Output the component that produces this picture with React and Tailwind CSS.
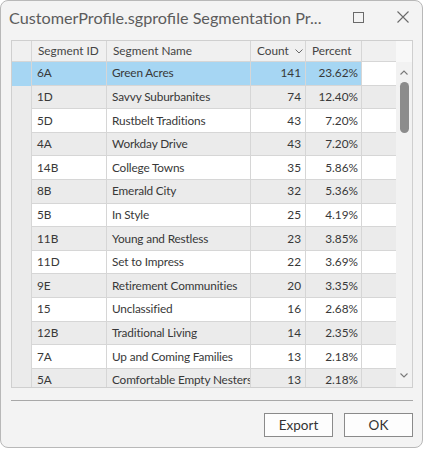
import React from 'react';

const ROWS = [
  ['6A', 'Green Acres', 141, '23.62%'],
  ['1D', 'Savvy Suburbanites', 74, '12.40%'],
  ['5D', 'Rustbelt Traditions', 43, '7.20%'],
  ['4A', 'Workday Drive', 43, '7.20%'],
  ['14B', 'College Towns', 35, '5.86%'],
  ['8B', 'Emerald City', 32, '5.36%'],
  ['5B', 'In Style', 25, '4.19%'],
  ['11B', 'Young and Restless', 23, '3.85%'],
  ['11D', 'Set to Impress', 22, '3.69%'],
  ['9E', 'Retirement Communities', 20, '3.35%'],
  ['15', 'Unclassified', 16, '2.68%'],
  ['12B', 'Traditional Living', 14, '2.35%'],
  ['7A', 'Up and Coming Families', 13, '2.18%'],
  ['5A', 'Comfortable Empty Nesters', 13, '2.18%'],
];

const FONT = { fontFamily: 'Lato, "Noto Sans", sans-serif' };

function Row({ row, idx }) {
  const selected = idx === 0;
  const bg = selected ? 'bg-[#a6d6f3]' : idx % 2 === 1 ? 'bg-[#ebebeb]' : 'bg-white';
  const gutter = selected ? 'bg-[#a6d6f3]' : 'bg-[#ebebeb]';
  const extra = selected ? 'bg-white' : idx % 2 === 1 ? 'bg-[#ebebeb]' : 'bg-white';
  return (
    <div className="flex h-[23.6px] shrink-0 text-[11.8px] text-[#383838]">
      <div className={`w-[20px] shrink-0 border-r border-[#d6d6d6] ${gutter}`} />
      <div className={`w-[75px] shrink-0 flex items-center pl-[5px] border-r border-b border-[#d6d6d6] ${bg}`}>
        {row[0]}
      </div>
      <div className={`w-[144px] shrink-0 flex items-center pl-[5px] border-r border-b border-[#d6d6d6] whitespace-nowrap overflow-hidden tracking-[-0.15px] ${bg}`}>
        {row[1]}
      </div>
      <div className={`w-[55px] shrink-0 flex items-center justify-end pr-[4px] border-r border-b border-[#d6d6d6] ${bg}`}>
        {row[2]}
      </div>
      <div className={`w-[56px] shrink-0 flex items-center justify-end pr-[3px] border-r border-b border-[#d6d6d6] ${bg}`}>
        {row[3]}
      </div>
      <div className={`w-[34px] shrink-0 border-b border-[#d6d6d6] ${extra}`} />
    </div>
  );
}

export default function App() {
  return (
    <div className="w-[424px] h-[450px] bg-white" style={FONT}>
      <div className="w-[423px] h-[448px] rounded-[8px] border border-[#b8b8b8] bg-[#f3f3f3] flex flex-col overflow-hidden">
        {/* Title bar */}
        <div className="h-[39px] flex items-start shrink-0">
          <div className="w-[340px] pt-[5px] pl-[8px] text-[16.2px] text-[#5c5c5c] whitespace-nowrap overflow-hidden">
            CustomerProfile.sgprofile Segmentation Pr...
          </div>
          <div className="flex-1 flex items-center pt-[10px] pl-[12px] gap-[33px]">
            <svg width="11" height="11" viewBox="0 0 11 11">
              <rect x="0.5" y="0.5" width="10" height="10" fill="none" stroke="#6a6a6a" strokeWidth="1" />
            </svg>
            <svg width="12" height="12" viewBox="0 0 12 12">
              <path d="M0.5 0.5 L11.5 11.5 M11.5 0.5 L0.5 11.5" stroke="#6a6a6a" strokeWidth="1.1" />
            </svg>
          </div>
        </div>

        {/* Grid */}
        <div className="ml-[10px] w-[402px] h-[348px] border border-[#cfcfcf] flex shrink-0 overflow-hidden">
          <div className="w-[384px] flex flex-col overflow-hidden">
            <div className="flex h-[21px] shrink-0 bg-[#f0f0f0] text-[11.8px] text-[#444]">
              <div className="w-[20px] shrink-0 border-r border-b border-[#d6d6d6]" />
              <div className="w-[75px] shrink-0 flex items-center pl-[6px] border-r border-b border-[#d6d6d6]">
                Segment ID
              </div>
              <div className="w-[144px] shrink-0 flex items-center pl-[6px] border-r border-b border-[#d6d6d6]">
                Segment Name
              </div>
              <div className="w-[55px] shrink-0 flex items-center pl-[6px] gap-[6px] border-r border-b border-[#d6d6d6]">
                Count
                <svg width="8" height="5" viewBox="0 0 8 5">
                  <path d="M0.5 0.5 L4 4 L7.5 0.5" fill="none" stroke="#6a6a6a" strokeWidth="1" />
                </svg>
              </div>
              <div className="w-[56px] shrink-0 flex items-center pl-[6px] border-r border-b border-[#d6d6d6]">
                Percent
              </div>
              <div className="w-[34px] shrink-0 border-b border-[#d6d6d6]" />
            </div>
            {ROWS.map((row, idx) => (
              <Row key={row[0]} row={row} idx={idx} />
            ))}
          </div>
          {/* Scrollbar */}
          <div className="w-[16px] shrink-0 flex flex-col bg-[#f2f2f2]">
            <div className="h-[21px] shrink-0 bg-[#f8f8f8]" />
            <div className="h-[20px] flex items-center justify-center">
              <svg width="8" height="5" viewBox="0 0 8 5">
                <path d="M0.5 4.5 L4 1 L7.5 4.5" fill="none" stroke="#7a7a7a" strokeWidth="1.1" />
              </svg>
            </div>
            <div className="mx-auto w-[9px] h-[51px] rounded-full bg-[#8c8c8c]" />
            <div className="flex-1" />
            <div className="h-[20px] flex items-center justify-center pb-[4px]">
              <svg width="8" height="5" viewBox="0 0 8 5">
                <path d="M0.5 0.5 L4 4 L7.5 0.5" fill="none" stroke="#7a7a7a" strokeWidth="1.1" />
              </svg>
            </div>
          </div>
        </div>

        {/* Separator */}
        <div className="ml-[10px] mt-[12px] w-[402px] h-px bg-[#a8a8a8] shrink-0" />

        {/* Buttons */}
        <div className="flex justify-end gap-[11px] mt-[12px] pr-[9px]">
          <button className="w-[69px] h-[24px] border border-[#8a8a8a] bg-[#fdfdfd] text-[13.5px] text-[#333]">
            Export
          </button>
          <button className="w-[69px] h-[24px] border border-[#8a8a8a] bg-[#fdfdfd] text-[13.5px] text-[#333]">
            OK
          </button>
        </div>
      </div>
    </div>
  );
}
